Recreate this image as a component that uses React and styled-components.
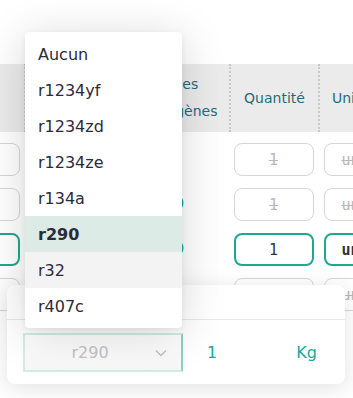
import styled, { createGlobalStyle } from 'styled-components';

const GlobalStyle = createGlobalStyle`
  html, body {
    margin: 0;
    padding: 0;
    background: #fff;
    overflow: hidden;
  }
  body {
    font-family: "DejaVu Sans", "Noto Sans", sans-serif;
  }
`;

const Page = styled.div`
  position: relative;
  width: 353px;
  height: 398px;
  overflow: hidden;
  background: #fff;
  padding-top: 64px;
  box-sizing: border-box;
`;

const Grid = styled.div`
  display: grid;
  grid-template-columns: 24px 96px 109px 89px 1fr;
`;

const HeadCell = styled.div`
  height: 68px;
  background: #ebebeb;
  border-left: ${({ first }) => (first ? 'none' : '2px dotted #c8c8c8')};
  box-sizing: border-box;
  display: flex;
  align-items: center;
  justify-content: ${({ left }) => (left ? 'flex-start' : 'center')};
  padding-left: ${({ left }) => (left ? '12px' : '0')};
  text-align: center;
  font-size: 14px;
  line-height: 27px;
  color: #1f6c78;
  white-space: nowrap;
  overflow: hidden;
`;

const Cell = styled.div`
  height: 45px;
  display: flex;
  align-items: flex-start;
  padding-top: 11px;
  box-sizing: border-box;
  justify-content: ${({ align }) => align || 'center'};
  padding-left: ${({ pl }) => pl || 0}px;
  padding-right: ${({ pr }) => pr || 0}px;
  overflow: hidden;
`;

const Box = styled.div`
  flex: 0 0 80px;
  height: 33px;
  box-sizing: border-box;
  border-radius: 8px;
  background: #fff;
  border: ${({ active }) => (active ? '2px solid #1fa88e' : '1.5px solid #d6d6d6')};
  display: flex;
  align-items: center;
  justify-content: center;
  font-family: "DejaVu Sans Mono", monospace;
  font-size: 15px;
  color: ${({ active }) => (active ? '#3a3030' : '#b8b8b8')};
  font-weight: ${({ active, strong }) => (active && strong ? 600 : 400)};
  text-decoration: ${({ active }) => (active ? 'none' : 'line-through')};
`;

const Fluid = styled.span`
  font-size: 15px;
  font-weight: 600;
  color: #1fa88e;
  line-height: 33px;
`;

const Menu = styled.ul`
  position: absolute;
  left: 25px;
  top: 32px;
  width: 157px;
  margin: 0;
  padding: 4px 0;
  list-style: none;
  background: #fff;
  border-radius: 4px;
  box-shadow: 0 6px 44px rgba(0, 0, 0, 0.17), 0 2px 6px rgba(0, 0, 0, 0.06);
  z-index: 3;
`;

const Option = styled.li`
  height: 36px;
  display: flex;
  align-items: center;
  padding: 0 13px;
  font-size: 16px;
  color: #2c2a38;
  font-weight: ${({ selected }) => (selected ? 700 : 400)};
  background: ${({ selected, hover }) => (selected ? '#dcebe6' : hover ? '#f3f3f3' : '#fff')};
`;

const Card = styled.div`
  position: absolute;
  left: 7px;
  top: 285px;
  width: 338px;
  height: 99px;
  background: #fff;
  border-radius: 8px;
  box-shadow: 0 4px 22px rgba(0, 0, 0, 0.12);
  display: flex;
  flex-direction: column;
  z-index: 2;
`;

const CardHead = styled.div`
  height: 34px;
  border-bottom: 1px solid #e8e8e8;
`;

const CardBody = styled.div`
  display: flex;
  align-items: center;
  padding: 13px 28px 0 16px;
`;

const Select = styled.div`
  width: 160px;
  height: 39px;
  box-sizing: border-box;
  border: 2px solid #d3ece6;
  border-right-color: #8fd0c0;
  background: linear-gradient(#fff, #f7f7f7);
  display: flex;
  align-items: center;
  padding: 0 14px 0 0;
  font-size: 16px;
  color: #c3c3c3;
`;

const SelectValue = styled.span`
  flex: 1;
  text-align: center;
`;

const Teal = styled.span`
  font-size: 16px;
  color: #17a89c;
  margin-left: ${({ ml }) => ml || '0'};
`;

const rows = [
  { active: false, fluid: '' },
  { active: false, fluid: 'r290' },
  { active: true, fluid: 'r290' },
  { active: false, fluid: '' },
];

const options = ['Aucun', 'r1234yf', 'r1234zd', 'r1234ze', 'r134a', 'r290', 'r32', 'r407c'];

function Chevron() {
  return (
    <svg width="12" height="8" viewBox="0 0 12 8" fill="none">
      <path d="M1 1.5 L6 6.5 L11 1.5" stroke="#bdbdbd" strokeWidth="1.3" />
    </svg>
  );
}

function App() {
  return (
    <Page>
      <GlobalStyle />
      <Grid>
        <HeadCell first />
        <HeadCell />
        <HeadCell>Cycles<br />frigorigènes</HeadCell>
        <HeadCell>Quantité</HeadCell>
        <HeadCell left>Unité</HeadCell>
        {rows.map((r, i) => [
          <Cell key={`a${i}`} align="flex-end" pr={4}>
            <Box active={r.active} />
          </Cell>,
          <Cell key={`b${i}`} />,
          <Cell key={`c${i}`} align="flex-end" pr={45}>
            {r.fluid && <Fluid>{r.fluid}</Fluid>}
          </Cell>,
          <Cell key={`d${i}`}>
            <Box active={r.active}>1</Box>
          </Cell>,
          <Cell key={`e${i}`} align="flex-start" pl={6}>
            <Box active={r.active} strong>unité</Box>
          </Cell>,
        ])}
      </Grid>

      <Card>
        <CardHead />
        <CardBody>
          <Select>
            <SelectValue>r290</SelectValue>
            <Chevron />
          </Select>
          <Teal ml="24px">1</Teal>
          <Teal ml="auto">Kg</Teal>
        </CardBody>
      </Card>

      <Menu>
        {options.map((o) => (
          <Option key={o} selected={o === 'r290'} hover={o === 'r32'}>
            {o}
          </Option>
        ))}
      </Menu>
    </Page>
  );
}

export default App;
